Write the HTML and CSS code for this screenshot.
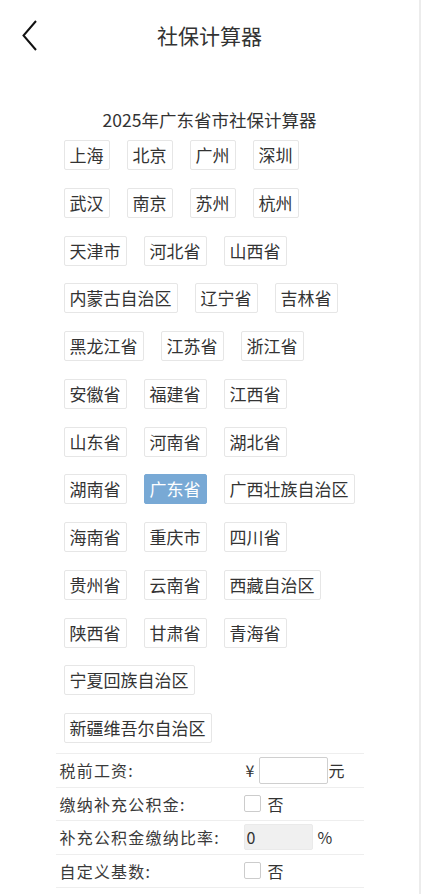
FILE: index.html
```html
<!DOCTYPE html>
<html lang="zh-CN">
<head>
  <meta charset="UTF-8" />
  <title>社保计算器</title>
  <meta name="viewport" content="width=device-width, initial-scale=1.0"/>
  <link rel="stylesheet" href="styles.css">
</head>
<body>
  <div class="page">
    <header class="topbar">
      <a class="back" href="#">
        <svg width="16" height="32" viewBox="0 0 16 32">
          <polyline points="14,2 1.5,16.5 14,31" fill="none" stroke="#111" stroke-width="2"/>
        </svg>
      </a>
      <h1>社保计算器</h1>
      <span></span>
    </header>

    <main class="content">
      <h2 class="calc-title">2025年广东省市社保计算器</h2>

      <div class="cities">
        <a class="city">上海</a>
        <a class="city">北京</a>
        <a class="city">广州</a>
        <a class="city">深圳</a>
        <a class="city">武汉</a>
        <a class="city">南京</a>
        <a class="city">苏州</a>
        <a class="city">杭州</a>
        <a class="city">天津市</a>
        <a class="city">河北省</a>
        <a class="city">山西省</a>
        <a class="city">内蒙古自治区</a>
        <a class="city">辽宁省</a>
        <a class="city">吉林省</a>
        <a class="city">黑龙江省</a>
        <a class="city">江苏省</a>
        <a class="city">浙江省</a>
        <a class="city">安徽省</a>
        <a class="city">福建省</a>
        <a class="city">江西省</a>
        <a class="city">山东省</a>
        <a class="city">河南省</a>
        <a class="city">湖北省</a>
        <a class="city">湖南省</a>
        <a class="city active">广东省</a>
        <a class="city">广西壮族自治区</a>
        <a class="city">海南省</a>
        <a class="city">重庆市</a>
        <a class="city">四川省</a>
        <a class="city">贵州省</a>
        <a class="city">云南省</a>
        <a class="city">西藏自治区</a>
        <a class="city">陕西省</a>
        <a class="city">甘肃省</a>
        <a class="city">青海省</a>
        <a class="city">宁夏回族自治区</a>
        <a class="city">新疆维吾尔自治区</a>
      </div>

      <div class="form">
        <div class="row">
          <label class="label">税前工资:</label>
          <div class="field">
            <span class="unit-pre">¥</span>
            <input type="text" class="text-input" />
            <span>元</span>
          </div>
        </div>
        <div class="row">
          <label class="label">缴纳补充公积金:</label>
          <div class="field">
            <span class="check"></span>
            <span class="check-text">否</span>
          </div>
        </div>
        <div class="row">
          <label class="label">补充公积金缴纳比率:</label>
          <div class="field">
            <input type="text" class="text-input disabled" value="0" disabled />
            <span class="unit-post">%</span>
          </div>
        </div>
        <div class="row">
          <label class="label">自定义基数:</label>
          <div class="field">
            <span class="check"></span>
            <span class="check-text">否</span>
          </div>
        </div>
        <div class="row">
          <label class="label"></label>
          <div class="field">
            <span class="check"></span>
          </div>
        </div>
      </div>
    </main>
  </div>
</body>
</html>
```

FILE: styles.css
```css
html,
body {
  margin: 0;
  padding: 0;
  height: 100%;
  overflow: hidden;
  background: #fff;
}

body {
  font-family: "Noto Sans CJK SC", "Noto Sans", sans-serif;
  color: #333;
}

.page {
  min-height: 100vh;
  border-right: 2px solid #ececec;
}

.topbar {
  height: 70px;
  display: grid;
  grid-template-columns: 1fr auto 1fr;
  align-items: center;
}

.topbar h1 {
  margin: 0;
  font-size: 21px;
  font-weight: 400;
  color: #333;
}

.back {
  display: flex;
  padding-left: 22px;
  padding-bottom: 1px;
}

.content {
  width: 308px;
  margin: 0 auto;
}

.calc-title {
  margin: 38px 0 8px;
  font-size: 17.5px;
  line-height: 24px;
  font-weight: 400;
  text-align: center;
  color: #333;
}

.cities {
  display: flex;
  flex-wrap: wrap;
  column-gap: 17px;
  row-gap: 17.75px;
  padding: 0 6px 0 8px;
}

.city {
  display: block;
  height: 30px;
  line-height: 28px;
  padding: 0 5px;
  font-size: 17px;
  color: #333;
  border: 1px solid #e6e6e6;
  border-radius: 2px;
  box-sizing: border-box;
  cursor: pointer;
}

.city.active {
  background: #78a9d5;
  border-color: #78a9d5;
  color: #fff;
}

.form {
  margin-top: 10px;
}

.row {
  display: flex;
  align-items: center;
  height: 33.5px;
  border-top: 1px solid #eee;
  box-sizing: border-box;
}

.label {
  width: 188px;
  padding-left: 4px;
  box-sizing: border-box;
  font-size: 16px;
  letter-spacing: 1.2px;
  color: #3a3a3a;
}

.field {
  display: flex;
  align-items: center;
  font-size: 16px;
  color: #333;
}

.unit-pre {
  margin: 0 5px 0 2px;
}

.unit-post {
  margin-left: 5px;
}

.text-input {
  width: 69px;
  height: 27px;
  padding: 0 2px;
  border: 1px solid #cfcfcf;
  border-radius: 2px;
  box-sizing: border-box;
  font-family: inherit;
  font-size: 16px;
  color: #333;
  outline: none;
}

.text-input.disabled {
  height: 26px;
  background: #f0f0f0;
  border-color: #eaeaea;
  color: #333;
}

.check {
  width: 17px;
  height: 17px;
  border: 1px solid #ccc;
  border-radius: 2px;
  box-sizing: border-box;
}

.check-text {
  margin-left: 7px;
}
```
